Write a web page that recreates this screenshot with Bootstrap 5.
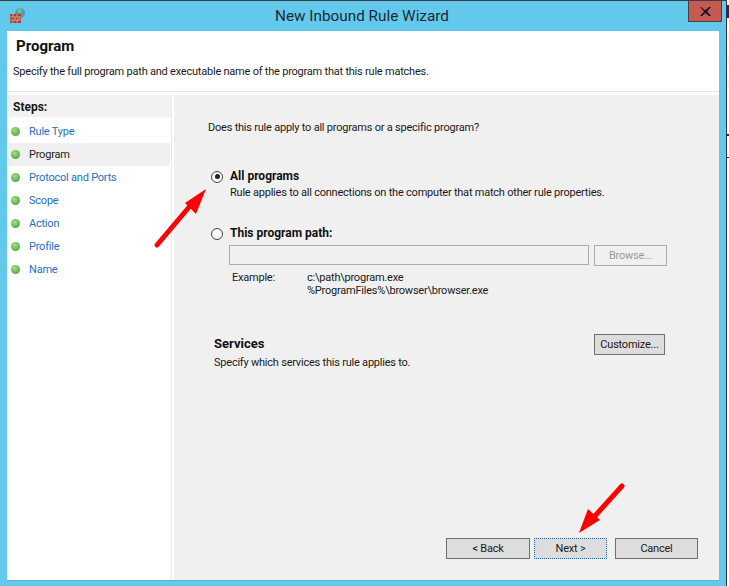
<!DOCTYPE html>
<html lang="en"><head><meta charset="utf-8"><title>New Inbound Rule Wizard</title>
<link href="https://cdn.jsdelivr.net/npm/bootstrap@5.3.0/dist/css/bootstrap.min.css" rel="stylesheet">
<style>
html,body{margin:0;width:729px;height:586px;overflow:hidden;background:#fff}
body{font-family:Roboto,"Open Sans",sans-serif;font-size:11px;letter-spacing:-.22px;line-height:15px;color:#1a1a1a;position:relative;display:flex}
.wiz-frame{width:726px;height:586px;flex:none;background:#63c9ec;border-top:1px solid #3a3f44;display:flex;flex-direction:column}
.wiz-strip{width:3px;height:586px;flex:none;border-left:1px solid #2c3540;background:linear-gradient(#fff 0 5px,#1c2a66 5px 18px,#fff 18px 33px,#f6f6c8 33px 41px,#fff 41px 57px,#f6f6c8 57px 65px,#fff 65px 80px,#f6f6c8 80px 88px,#fff 88px 134px,#1c2a66 134px 136px,#fff 136px 157px,#222 157px 158px,#fff 158px)}
.wiz-title{height:30px;flex:none;position:relative;display:flex;align-items:center;justify-content:center;font-size:15.3px;letter-spacing:0;color:#1c2b33;padding-top:1px;padding-right:2px}
.wiz-close{position:absolute;right:4px;top:0;width:34px;height:21px;background:#c75a50;border:1px solid #44403f;border-top:0;display:flex;align-items:center;justify-content:center}
.wiz-logo{position:absolute;left:9px;top:5px}
.wiz-inner{margin:0 7px 6px 7px;flex:1;display:flex;flex-direction:column;background:#fff;min-height:0;box-shadow:0 1px 0 #58b3d4}
.wiz-head{height:61px;flex:none;background:#fff;border-bottom:1px solid #e6e6e6;padding:6px 0 0 6px}
.wiz-h{font-weight:700;font-size:15px;letter-spacing:0;line-height:18px;color:#111;padding-left:3px}
.wiz-sub{margin-top:9px}
.wiz-body{flex:1;display:flex;padding-top:3px;min-height:0}
.wiz-steps{width:165px;flex:none;border-right:1px solid #e9e9e9;margin-right:2px}
.wiz-steps-h{height:22px;padding:5px 0 0 6px;font-weight:700;font-size:12px;letter-spacing:0;background:repeating-conic-gradient(#ececec 0 25%,#f7f7f7 0 50%) 0 0/2px 2px}
.wiz-step{height:23px;display:flex;align-items:center;color:#1f6fc4;margin-right:1px;padding-left:4px}
.wiz-steplist{padding-top:3px}
.wiz-step.on{background:#f0f0f0;color:#222}
.wiz-dot{width:9px;height:9px;flex:none;border-radius:50%;background:radial-gradient(circle at 40% 35%,#a5e08c,#52b041 70%);margin-right:9px}
.wiz-pane{flex:1;background:#f0f0f0;padding:0 0 0 34px;display:flex;flex-direction:column;min-width:0}
.wiz-q{margin-top:25px}
.wiz-opt{display:flex;align-items:center;font-weight:700;font-size:12px;letter-spacing:0;gap:7px;margin-left:4px;height:15px;color:#111}
.wiz-opt-a{margin-top:34px}
.wiz-opt-b{margin-top:26px}
.wiz-radio{width:12px;height:12px;flex:none;border-radius:50%;background:#fbfbfb;border:1px solid #444;display:flex;align-items:center;justify-content:center;margin-left:-1px}
.wiz-radio i{width:5px;height:5px;border-radius:50%;background:#222;display:block}
.wiz-ind{margin:1px 0 0 22px}
.wiz-pathrow{display:flex;margin:4px 0 0 21px;gap:5px}
.wiz-input{width:360px;height:20px;border:1px solid #adadad;background:#f0f0f0}
.wiz-btn{height:21px;border:1px solid #6f6f6f;background:#dddddd;border-radius:0;padding:0;line-height:18px;color:#1a1a1a;letter-spacing:inherit}
.wiz-btn.off{border-color:#adadad;background:#f0f0f0;color:#9a9a9a;width:73px}
.wiz-ex{display:flex;margin:5px 0 0 24px;line-height:13px}
.wiz-ex div:first-child{width:75px}
.wiz-svc{display:flex;justify-content:space-between;margin:37px 54px 0 6px}
.wiz-svc-btn{width:71px}
.wiz-svc-t{font-weight:700;font-size:13px;letter-spacing:0;margin-top:2px;margin-bottom:4px;color:#111}
.wiz-foot{margin-top:auto;padding:0 21px 21px 0;display:flex;justify-content:flex-end;gap:4px}
.wiz-foot .wiz-btn{width:83px}
.wiz-foot .wiz-back{width:84px}
.wiz-foot .wiz-next{width:73px;border:1px dotted #1e6fd0;margin-right:4px}
.wiz-arrows{position:absolute;left:0;top:0;pointer-events:none}
</style></head><body>
<div class="wiz-frame">
 <div class="wiz-title">New Inbound Rule Wizard
  <svg class="wiz-logo" width="18" height="18" viewBox="0 0 18 18"><circle cx="11" cy="7" r="5" fill="#4c94d8"/><path d="M8 3l4-1 1 4-3 2z" fill="#7dc25a"/><rect x="1" y="8" width="11" height="9" fill="#a8432d"/><path d="M1 11h11M1 14h11M4 8v3M8 8v3M6 11v3M10 11v3M4 14v3M8 14v3" stroke="#e3b09c" stroke-width=".8"/></svg>
  <div class="wiz-close"><svg width="11" height="9" viewBox="0 0 11 9"><path d="M1 0l3.500 3L5.500 3 9 0h2L7 4.500 11 9H9L5.500 6 2 9H0L4 4.500 0 0z" fill="#1b0c2a"/></svg></div>
 </div>
 <div class="wiz-inner">
  <div class="wiz-head"><div class="wiz-h">Program</div><div class="wiz-sub">Specify the full program path and executable name of the program that this rule matches.</div></div>
  <div class="wiz-body">
   <div class="wiz-steps">
    <div class="wiz-steps-h">Steps:</div>
    <div class="wiz-steplist">
    <div class="wiz-step"><span class="wiz-dot"></span>Rule Type</div>
    <div class="wiz-step on"><span class="wiz-dot"></span>Program</div>
    <div class="wiz-step"><span class="wiz-dot"></span>Protocol and Ports</div>
    <div class="wiz-step"><span class="wiz-dot"></span>Scope</div>
    <div class="wiz-step"><span class="wiz-dot"></span>Action</div>
    <div class="wiz-step"><span class="wiz-dot"></span>Profile</div>
    <div class="wiz-step"><span class="wiz-dot"></span>Name</div>
    </div>
   </div>
   <div class="wiz-pane">
    <div class="wiz-q">Does this rule apply to all programs or a specific program?</div>
    <div class="wiz-opt wiz-opt-a"><span class="wiz-radio"><i></i></span>All programs</div>
    <div class="wiz-ind">Rule applies to all connections on the computer that match other rule properties.</div>
    <div class="wiz-opt wiz-opt-b"><span class="wiz-radio"></span>This program path:</div>
    <div class="wiz-pathrow"><div class="wiz-input"></div><button class="wiz-btn off" type="button">Browse...</button></div>
    <div class="wiz-ex"><div>Example:</div><div>c:\path\program.exe<br>%ProgramFiles%\browser\browser.exe</div></div>
    <div class="wiz-svc"><div><div class="wiz-svc-t">Services</div><div>Specify which services this rule applies to.</div></div><button class="wiz-btn wiz-svc-btn" type="button">Customize...</button></div>
    <div class="wiz-foot"><button class="wiz-btn wiz-back" type="button">&lt; Back</button><button class="wiz-btn wiz-next" type="button">Next &gt;</button><button class="wiz-btn" type="button">Cancel</button></div>
   </div>
  </div>
 </div>
</div>
<div class="wiz-strip"></div>
<svg class="wiz-arrows" width="729" height="586" viewBox="0 0 729 586"><path d="M157 245L190 206" stroke="#f00" stroke-width="5" stroke-linecap="round"/><path d="M206 189L185 203 196 214z" fill="#f00"/><path d="M622 486L594 517" stroke="#f00" stroke-width="5" stroke-linecap="round"/><path d="M579 533L588 509 600 520z" fill="#f00"/></svg>
<script src="https://cdn.jsdelivr.net/npm/bootstrap@5.3.0/dist/js/bootstrap.bundle.min.js"></script>
</body></html>
